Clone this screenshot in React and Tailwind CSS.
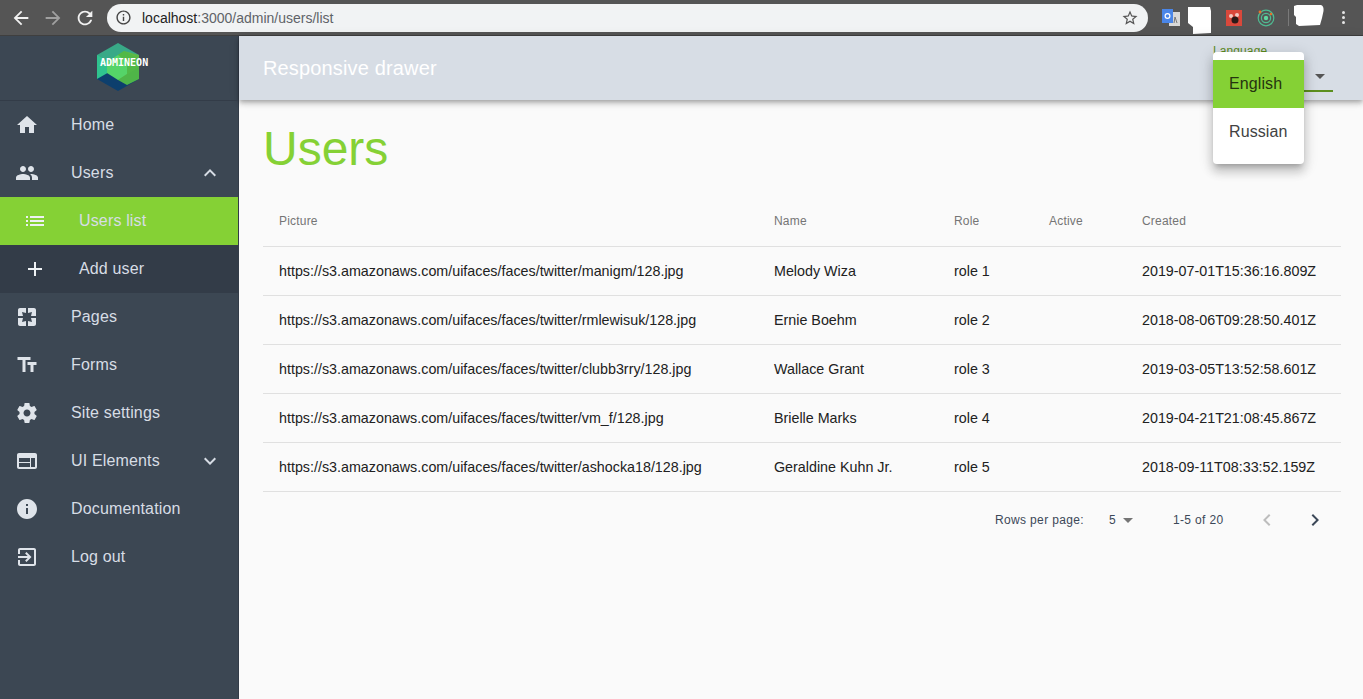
import React from "react";

const P = {
  home: "M10 20v-6h4v6h5v-8h3L12 3 2 12h3v8z",
  people: "M16 11c1.66 0 2.99-1.34 2.99-3S17.66 5 16 5c-1.66 0-3 1.34-3 3s1.34 3 3 3zm-8 0c1.66 0 2.99-1.34 2.99-3S9.66 5 8 5C6.34 5 5 6.34 5 8s1.34 3 3 3zm0 2c-2.33 0-7 1.17-7 3.5V19h14v-2.5c0-2.33-4.67-3.5-7-3.5zm8 0c-.29 0-.62.02-.97.05 1.16.84 1.97 1.97 1.97 3.45V19h6v-2.5c0-2.33-4.67-3.5-7-3.5z",
  less: "M12 8l-6 6 1.41 1.41L12 10.83l4.59 4.58L18 14z",
  more: "M16.59 8.59L12 13.17 7.41 8.59 6 10l6 6 6-6z",
  list: "M3 13h2v-2H3v2zm0 4h2v-2H3v2zm0-8h2V7H3v2zm4 4h14v-2H7v2zm0 4h14v-2H7v2zM7 7v2h14V7H7z",
  add: "M19 13h-6v6h-2v-6H5v-2h6V5h2v6h6v2z",
  pages: "M3 5v6h5L7 7l4 1V3H5c-1.1 0-2 .9-2 2zm5 8H3v6c0 1.1.9 2 2 2h6v-5l-4 1 1-4zm9 4l-4-1v5h6c1.1 0 2-.9 2-2v-6h-5l1 4zm2-14h-6v5l4-1-1 4h5V5c0-1.1-.9-2-2-2z",
  text: "M2.5 4v3h5v12h3V7h5V4h-13zm19 5h-9v3h3v7h3v-7h3V9z",
  settings: "M19.43 12.98c.04-.32.07-.64.07-.98s-.03-.66-.07-.98l2.11-1.65c.19-.15.24-.42.12-.64l-2-3.46c-.12-.22-.39-.3-.61-.22l-2.49 1c-.52-.4-1.08-.73-1.69-.98l-.38-2.65C14.46 2.18 14.25 2 14 2h-4c-.25 0-.46.18-.49.42l-.38 2.65c-.61.25-1.17.59-1.69.98l-2.49-1c-.23-.09-.49 0-.61.22l-2 3.46c-.13.22-.07.49.12.64l2.11 1.65c-.04.32-.07.65-.07.98s.03.66.07.98l-2.11 1.65c-.19.15-.24.42-.12.64l2 3.46c.12.22.39.3.61.22l2.49-1c.52.4 1.08.73 1.69.98l.38 2.65c.03.24.24.42.49.42h4c.25 0 .46-.18.49-.42l.38-2.65c.61-.25 1.17-.59 1.69-.98l2.49 1c.23.09.49 0 .61-.22l2-3.46c.12-.22.07-.49-.12-.64l-2.11-1.65zM12 15.5c-1.93 0-3.5-1.57-3.5-3.5s1.57-3.5 3.5-3.5 3.5 1.57 3.5 3.5-1.57 3.5-3.5 3.5z",
  web: "M20 4H4c-1.1 0-1.99.9-1.99 2L2 18c0 1.1.9 2 2 2h16c1.1 0 2-.9 2-2V6c0-1.1-.9-2-2-2zm-5 14H4v-4h11v4zm0-5H4V9h11v4zm5 5h-4V9h4v9z",
  info: "M12 2C6.48 2 2 6.48 2 12s4.48 10 10 10 10-4.48 10-10S17.52 2 12 2zm1 15h-2v-6h2v6zm0-8h-2V7h2v2z",
  exit: "M10.09 15.59L11.5 17l5-5-5-5-1.41 1.41L12.67 11H3v2h9.67l-2.58 2.59zM19 3H5c-1.11 0-2 .89-2 2v4h2V5h14v14H5v-4H3v4c0 1.1.89 2 2 2h14c1.1 0 2-.9 2-2V5c0-1.1-.9-2-2-2z",
  drop: "M7 10l5 5 5-5z",
  left: "M15.41 7.41L14 6l-6 6 6 6 1.41-1.41L10.83 12z",
  right: "M10 6L8.59 7.41 13.17 12l-4.58 4.59L10 18l6-6z",
  back: "M20 11H7.83l5.59-5.59L12 4l-8 8 8 8 1.41-1.41L7.83 13H20v-2z",
  forward: "M12 4l-1.41 1.41L16.17 11H4v2h12.17l-5.58 5.59L12 20l8-8z",
  reload: "M17.65 6.35C16.2 4.9 14.21 4 12 4c-4.42 0-7.99 3.58-7.99 8s3.57 8 7.99 8c3.73 0 6.84-2.55 7.73-6h-2.08c-.82 2.33-3.04 4-5.65 4-3.31 0-6-2.69-6-6s2.69-6 6-6c1.66 0 3.14.69 4.22 1.78L13 11h7V4l-2.35 2.35z",
  infoOutline: "M11 7h2v2h-2zm0 4h2v6h-2zm1-9C6.48 2 2 6.48 2 12s4.48 10 10 10 10-4.48 10-10S17.52 2 12 2zm0 18c-4.41 0-8-3.59-8-8s3.59-8 8-8 8 3.59 8 8-3.59 8-8 8z",
  star: "M22 9.24l-7.19-.62L12 2 9.19 8.63 2 9.24l5.46 4.73L5.82 21 12 17.27 18.18 21l-1.63-7.03L22 9.24zM12 15.4l-3.76 2.27 1-4.28-3.32-2.88 4.38-.38L12 6.1l1.71 4.04 4.38.38-3.32 2.88 1 4.28L12 15.4z",
};

function Icon({ d, className }) {
  return (
    <svg viewBox="0 0 24 24" fill="currentColor" className={className}>
      <path d={d} />
    </svg>
  );
}

const navTop = [
  { label: "Home", icon: P.home },
  { label: "Users", icon: P.people, arrow: P.less },
];
const navBottom = [
  { label: "Pages", icon: P.pages },
  { label: "Forms", icon: P.text },
  { label: "Site settings", icon: P.settings },
  { label: "UI Elements", icon: P.web, arrow: P.more },
  { label: "Documentation", icon: P.info },
  { label: "Log out", icon: P.exit },
];

const rows = [
  ["https://s3.amazonaws.com/uifaces/faces/twitter/manigm/128.jpg", "Melody Wiza", "role 1", "2019-07-01T15:36:16.809Z"],
  ["https://s3.amazonaws.com/uifaces/faces/twitter/rmlewisuk/128.jpg", "Ernie Boehm", "role 2", "2018-08-06T09:28:50.401Z"],
  ["https://s3.amazonaws.com/uifaces/faces/twitter/clubb3rry/128.jpg", "Wallace Grant", "role 3", "2019-03-05T13:52:58.601Z"],
  ["https://s3.amazonaws.com/uifaces/faces/twitter/vm_f/128.jpg", "Brielle Marks", "role 4", "2019-04-21T21:08:45.867Z"],
  ["https://s3.amazonaws.com/uifaces/faces/twitter/ashocka18/128.jpg", "Geraldine Kuhn Jr.", "role 5", "2018-09-11T08:33:52.159Z"],
];

function NavRow({ item }) {
  return (
    <div className="flex h-12 items-center pl-[15px] pr-4 text-[#d7dde5]">
      <Icon d={item.icon} className="h-6 w-6 shrink-0 text-[#dfe4ea]" />
      <span className="ml-8 flex-1 text-base tracking-[0.15px]">{item.label}</span>
      {item.arrow && <Icon d={item.arrow} className="h-6 w-6 text-[#d7dde5]" />}
    </div>
  );
}

function Logo() {
  return (
    <div className="relative flex h-[65px] items-center justify-center border-b border-[#333c48] pb-[2px]">
      <svg viewBox="0 0 42 48" className="ml-[-2px] h-12 w-[42px]">
        <path d="M21 0L42 12L42 24L21 24L0 24L0 12Z" fill="#38a987" />
        <path d="M0 24L21 24L21 36L42 24L42 36L21 48L0 36Z" fill="#0d3f6d" />
        <path d="M0 12L0 24L0 36L21 24Z" fill="#2fc38f" />
        <path d="M27 8L42 12L42 36L21 37L21 12Z" fill="#5db947" />
        <path d="M21 12L27 8L42 16L42 24L21 36Z" fill="#51b947" />
        <path d="M21 12L10 19L10 30L21 37L30 31L30 19Z" fill="#55d468" />
        <path d="M21 37L32 30L42 24L42 36L30 42Z" fill="#4fb548" />
      </svg>
      <span className="absolute left-[100px] top-[21px] font-['DejaVu_Sans_Mono',monospace] text-[10px] leading-[12px] font-bold text-white">
        ADMINEON
      </span>
    </div>
  );
}

function ChromeBar() {
  return (
    <div className="flex h-9 items-center border-b border-[#3f3f3f] bg-[#555555] pl-[10px]">
      <Icon d={P.back} className="h-[22px] w-[22px] text-[#f1f1f1]" />
      <Icon d={P.forward} className="ml-[10px] h-[22px] w-[22px] text-[#a0a0a0]" />
      <Icon d={P.reload} className="ml-[10px] h-[22px] w-[22px] text-[#f1f1f1]" />
      <div className="ml-[11px] flex h-7 w-[1041px] items-center rounded-full bg-[#f1f3f4] pl-2 pr-[9px]">
        <Icon d={P.infoOutline} className="h-[17px] w-[17px] text-[#444]" />
        <span className="ml-[10px] flex-1 text-sm text-[#5f6368]">
          <span className="text-[#222]">localhost</span>:3000/admin/users/list
        </span>
        <Icon d={P.star} className="h-[18px] w-[18px] text-[#555]" />
      </div>
      <svg viewBox="0 0 18 18" className="ml-[14px] h-[18px] w-[18px]">
        <rect x="7" y="3" width="11" height="14" fill="#d8d8d8" />
        <path d="M0 0H11V14H0Z" fill="#4a86e8" />
        <circle cx="5.5" cy="7" r="2.4" fill="none" stroke="#fff" strokeWidth="1.2" />
        <path d="M13 8l-1 6M13 8l2 6" stroke="#777" strokeWidth="1" />
      </svg>
      <svg viewBox="0 0 23 27" className="ml-2 mt-[5px] h-[27px] w-[23px]">
        <path d="M0 0H22L23 4V26L5 27L5 20L0 16Z" fill="#fff" />
      </svg>
      <svg viewBox="0 0 16 16" className="ml-[15px] h-4 w-4">
        <rect width="16" height="16" fill="#d9483b" />
        <circle cx="5" cy="6" r="2" fill="#f3c9c2" />
        <circle cx="11" cy="5" r="2" fill="#f3c9c2" />
        <circle cx="9" cy="10" r="3.5" fill="#2b1a18" />
      </svg>
      <svg viewBox="0 0 18 18" className="ml-[15px] h-[18px] w-[18px]">
        <circle cx="9" cy="9" r="7.8" fill="none" stroke="#4fbb92" strokeWidth="1.2" />
        <circle cx="9" cy="9" r="4.6" fill="none" stroke="#4fbb92" strokeWidth="1.2" />
        <circle cx="9" cy="9" r="2.2" fill="#5fd6a0" />
        <circle cx="3" cy="3" r="1.4" fill="#e8702a" />
        <circle cx="14" cy="5" r="1.2" fill="#e8702a" />
      </svg>
      <div className="ml-[13px] h-[17px] w-px bg-[#7a7a7a]" />
      <svg viewBox="0 0 31 21" className="ml-1 mb-[5px] h-[21px] w-[31px]">
        <path d="M1 1L4 0H28Q31 1 30.5 6L29 13L27 20L6 21L3 19L3 12L1 10Z" fill="#fff" />
      </svg>
      <div className="ml-[18px] flex flex-col gap-[2px]">
        <div className="h-[3px] w-[3px] rounded-full bg-[#e5e5e5]" />
        <div className="h-[3px] w-[3px] rounded-full bg-[#e5e5e5]" />
        <div className="h-[3px] w-[3px] rounded-full bg-[#e5e5e5]" />
      </div>
    </div>
  );
}

function UsersTable() {
  return (
    <table className="mt-[19px] w-[1078px] table-fixed border-collapse text-left">
      <colgroup>
        <col className="w-[495px]" />
        <col className="w-[180px]" />
        <col className="w-[95px]" />
        <col className="w-[93px]" />
        <col />
      </colgroup>
      <thead>
        <tr className="h-[50px] border-b border-[#e0e0e0] text-xs tracking-[0.2px] text-[#757575]">
          {["Picture", "Name", "Role", "Active", "Created"].map((h) => (
            <th key={h} className="pl-4 font-normal">
              {h}
            </th>
          ))}
        </tr>
      </thead>
      <tbody>
        {rows.map((r) => (
          <tr key={r[0]} className="h-[49px] border-b border-[#e0e0e0] text-[14.3px] text-[#212121]">
            <td className="pl-4 pt-[2px] whitespace-nowrap">{r[0]}</td>
            <td className="pl-4 pt-[2px] whitespace-nowrap">{r[1]}</td>
            <td className="pl-4 pt-[2px] whitespace-nowrap">{r[2]}</td>
            <td className="pl-4" />
            <td className="pl-4 pt-[2px] whitespace-nowrap">{r[3]}</td>
          </tr>
        ))}
      </tbody>
    </table>
  );
}

function Pagination() {
  return (
    <div className="flex h-14 w-[1078px] items-center text-xs tracking-[0.35px] text-[#3c4858]">
      <span className="ml-[732px]">Rows per page:</span>
      <span className="ml-[25px]">5</span>
      <Icon d={P.drop} className="ml-0 h-6 w-6 text-[#757575]" />
      <span className="ml-[33px]">1-5 of 20</span>
      <Icon d={P.left} className="ml-[31px] h-6 w-6 text-[#bdbdbd]" />
      <Icon d={P.right} className="ml-6 h-6 w-6 text-[#3c4858]" />
    </div>
  );
}

export default function App() {
  return (
    <div className="relative h-[699px] w-[1363px] overflow-hidden bg-[#fafafa] font-['Liberation_Sans',Arial,sans-serif]">
      <ChromeBar />
      <div className="flex h-[663px]">
        <aside className="w-[239px] shrink-0 border-r border-[#333c48] bg-[#3c4753]">
          <Logo />
          {navTop.map((item) => (
            <NavRow key={item.label} item={item} />
          ))}
          <div className="flex h-12 items-center bg-[#85d135] pl-[23px] text-[#d7dde5]">
            <Icon d={P.list} className="h-6 w-6 text-[#eef1f4]" />
            <span className="ml-8 text-base tracking-[0.15px]">Users list</span>
          </div>
          <div className="flex h-12 items-center bg-[#333c48] pl-[23px] text-[#d7dde5]">
            <Icon d={P.add} className="h-6 w-6 text-[#eef1f4]" />
            <span className="ml-8 text-base tracking-[0.15px]">Add user</span>
          </div>
          {navBottom.map((item) => (
            <NavRow key={item.label} item={item} />
          ))}
        </aside>
        <div className="flex-1">
          <header className="flex h-16 items-center bg-[#d7dde5] pl-6 shadow-[0_2px_4px_-1px_rgba(0,0,0,0.2),0_4px_5px_0_rgba(0,0,0,0.14),0_1px_10px_0_rgba(0,0,0,0.12)]">
            <h1 className="text-xl tracking-[0.15px] text-white">Responsive drawer</h1>
          </header>
          <main className="pl-6">
            <h2 className="pt-[21px] text-[48px] leading-[56px] text-[#85d135]">Users</h2>
            <UsersTable />
            <Pagination />
          </main>
        </div>
      </div>

      {/* language select sits under the open menu */}
      <div className="absolute left-[1213px] top-[43px] text-xs tracking-[0.1px] text-[#5c8a1e]">Language</div>
      <div className="absolute left-[1213px] top-[90px] h-[2px] w-[120px] bg-[#5c8f1f]" />
      <Icon d={P.drop} className="absolute left-[1308px] top-[64px] h-6 w-6 text-[#555]" />
      <div className="absolute left-[1213px] top-[52px] w-[91px] rounded bg-white py-2 text-base tracking-[0.1px] shadow-[0_5px_5px_-3px_rgba(0,0,0,0.2),0_8px_10px_1px_rgba(0,0,0,0.14),0_3px_14px_2px_rgba(0,0,0,0.12)]">
        <div className="flex h-12 items-center bg-[#85d135] pl-4 text-[#25340f]">English</div>
        <div className="flex h-12 items-center pl-4 text-[#424242]">Russian</div>
      </div>
    </div>
  );
}
